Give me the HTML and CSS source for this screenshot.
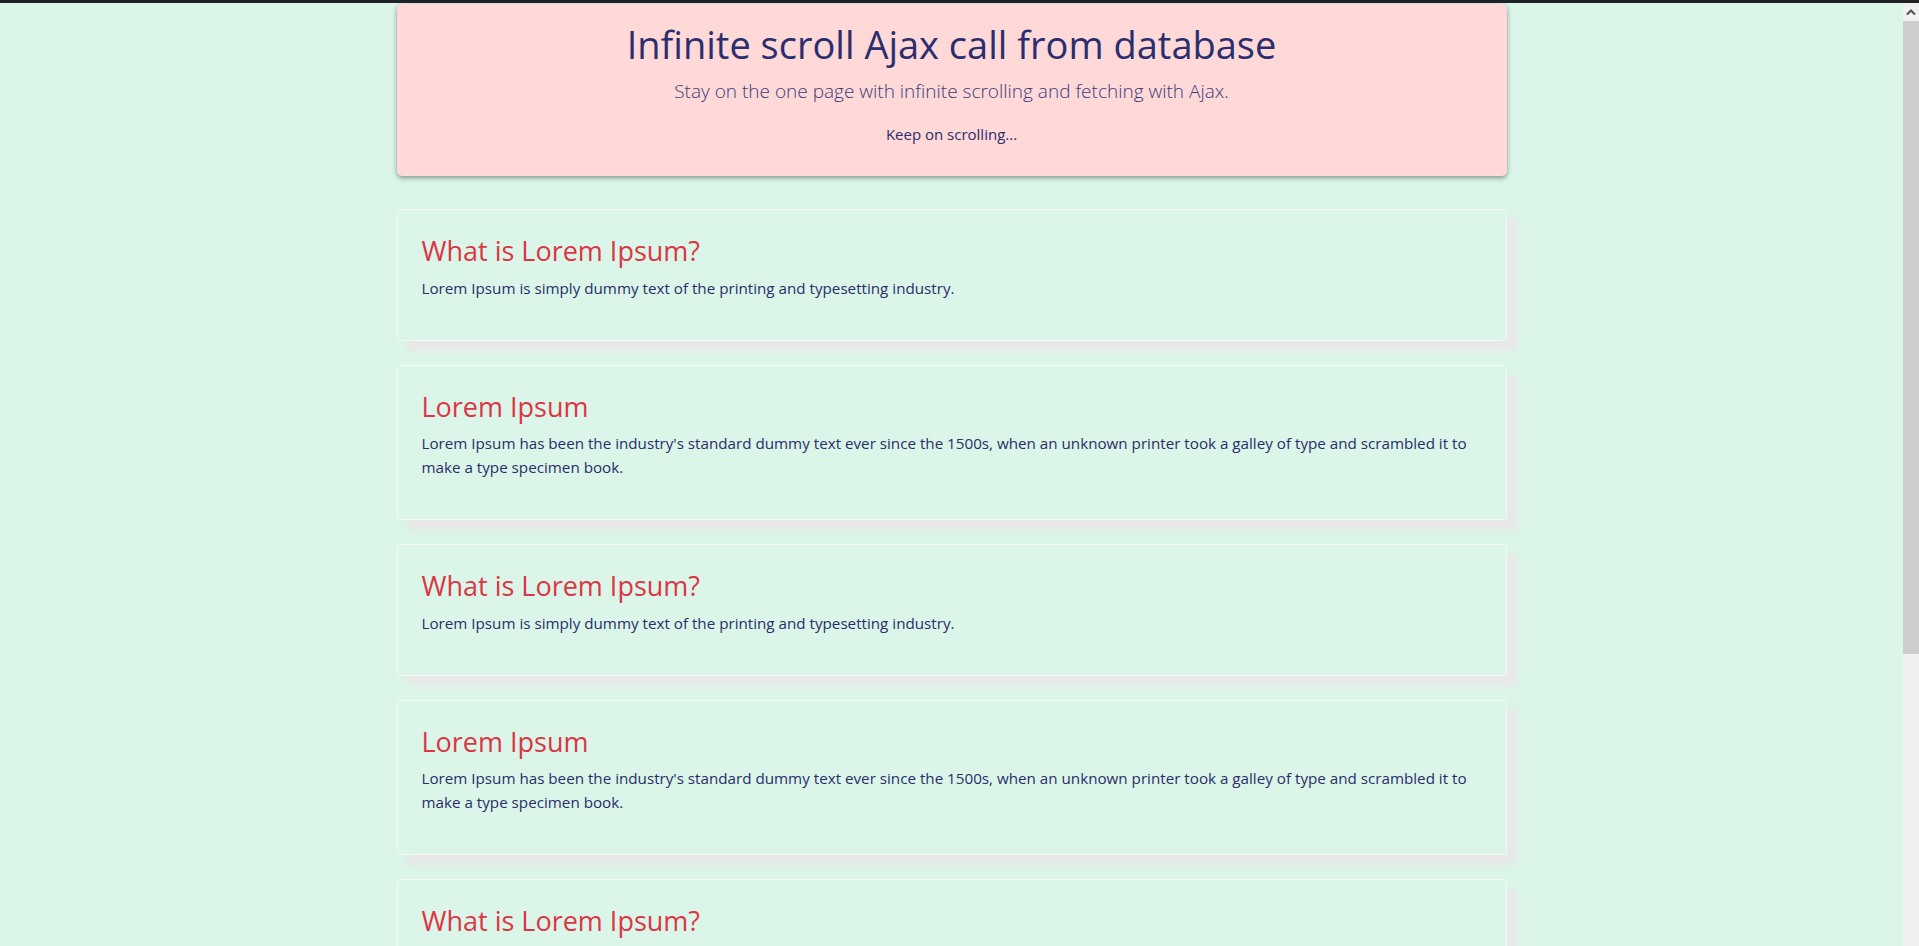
FILE: index.html
```html
<!DOCTYPE html>
<html lang="en">
<head>
<meta charset="utf-8">
<title>Infinite scroll Ajax call from database</title>
<link rel="stylesheet" href="styles.css">
</head>
<body>
<div class="topbar"></div>
<div class="page">
  <main class="container">
    <header class="hero">
      <h1 class="hero-title">Infinite scroll Ajax call from database</h1>
      <p class="hero-lead">Stay on the one page with infinite scrolling and fetching with Ajax.</p>
      <p class="hero-note">Keep on scrolling...</p>
    </header>
    <section class="feed">
      <article class="card"><h3 class="card-title">What is Lorem Ipsum?</h3><p class="card-text">Lorem Ipsum is simply dummy text of the printing and typesetting industry.</p></article>
      <article class="card"><h3 class="card-title">Lorem Ipsum</h3><p class="card-text">Lorem Ipsum has been the industry's standard dummy text ever since the 1500s, when an unknown printer took a galley of type and scrambled it to make a type specimen book.</p></article>
      <article class="card"><h3 class="card-title">What is Lorem Ipsum?</h3><p class="card-text">Lorem Ipsum is simply dummy text of the printing and typesetting industry.</p></article>
      <article class="card"><h3 class="card-title">Lorem Ipsum</h3><p class="card-text">Lorem Ipsum has been the industry's standard dummy text ever since the 1500s, when an unknown printer took a galley of type and scrambled it to make a type specimen book.</p></article>
      <article class="card"><h3 class="card-title">What is Lorem Ipsum?</h3><p class="card-text">Lorem Ipsum is simply dummy text of the printing and typesetting industry.</p></article>
    </section>
  </main>
</div>
<div class="scrollbar" aria-hidden="true">
  <div class="scroll-btn">
    <svg width="16" height="17" viewBox="0 0 16 17"><path d="M4 11.5 L8 7.5 L12 11.5" fill="none" stroke="#505050" stroke-width="2"/></svg>
  </div>
  <div class="scroll-thumb"></div>
</div>
</body>
</html>
```
FILE: styles.css
```css
html, body {
  margin: 0;
  padding: 0;
}
body {
  background: #dbf5e8;
  color: #2a2d6c;
  font-family: "Open Sans", "Noto Sans", sans-serif;
  font-size: 16px;
  line-height: 1.5;
}
.topbar {
  position: relative;
  z-index: 2;
  height: 3px;
  background: #202124;
}
.page {
  margin-right: 16px;
}
.container {
  width: 1110px;
  margin: 0 auto;
  padding-top: 1px;
}
.hero {
  background: #ffd8d8;
  border-radius: 5px;
  box-shadow: 0 2px 5px rgba(0, 0, 0, 0.4);
  text-align: center;
  padding: 16px 32px 14px;
  margin-bottom: 33px;
}
.hero-title {
  margin: 0 0 8px;
  font-size: 38px;
  font-weight: 400;
  line-height: 48px;
  color: #2b2e6e;
}
.hero-lead {
  margin: 0 0 16px;
  font-size: 19px;
  font-weight: 300;
  line-height: 30px;
  color: #3a3d78;
}
.hero-note {
  margin: 0 0 16px;
  font-size: 15px;
  line-height: 24px;
}
.feed {
  display: flex;
  flex-direction: column;
  gap: 24px;
}
.card {
  border: 1px solid #f4f8f6;
  border-radius: 4px;
  padding: 24px;
  box-shadow: 10px 10px 6px #e8e8e8;
}
.card-title {
  margin: 0 0 8px;
  font-size: 27px;
  font-weight: 400;
  line-height: 33.6px;
  color: #dc3545;
}
.card-text {
  margin: 0 0 16px;
  font-size: 15.2px;
  line-height: 24px;
  color: #2a2d6c;
}
.scrollbar {
  position: fixed;
  top: 0;
  right: 0;
  bottom: 0;
  width: 16px;
  padding-top: 3px;
  background: #f0f0f0;
  display: flex;
  flex-direction: column;
}
.scroll-btn {
  height: 17px;
  display: flex;
  align-items: center;
  justify-content: center;
}
.scroll-btn svg {
  display: block;
}
.scroll-thumb {
  height: 633px;
  margin-top: 1px;
  background: #cdcdcd;
}
```
